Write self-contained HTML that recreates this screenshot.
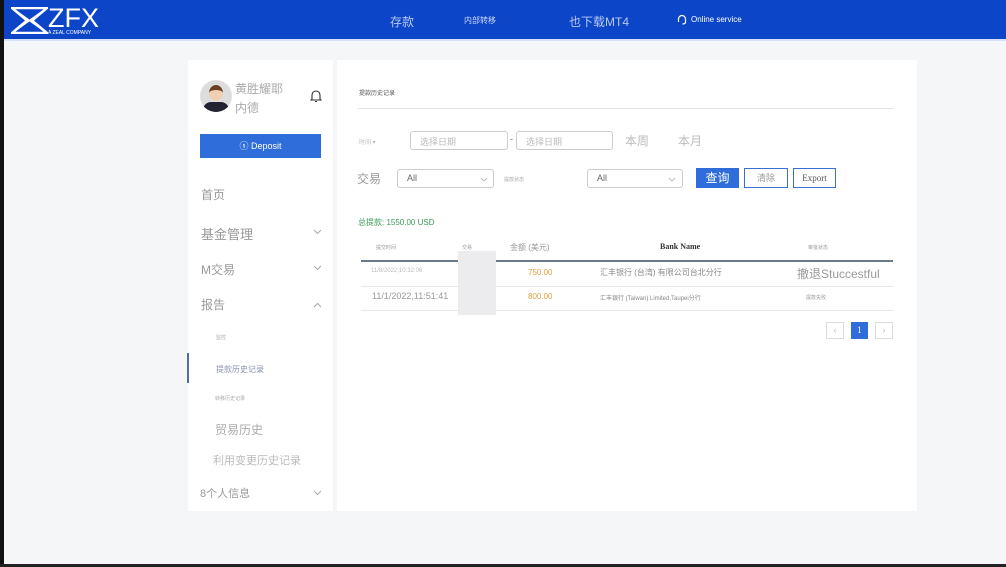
<!DOCTYPE html>
<html><head><meta charset="utf-8"><style>
*{margin:0;padding:0;box-sizing:border-box}
body{width:1006px;height:567px;overflow:hidden;background:#f5f6f8;font-family:"Liberation Sans","Noto Sans CJK SC",sans-serif;position:relative;color:#888}
.a{position:absolute;white-space:nowrap}
.hdr{left:0;top:0;width:1006px;height:41px;background:#0c45c8;border-bottom:2px solid #d4e3f7}
.card{background:#fff}
.sel{border:1px solid #ccc;border-radius:3px;height:19px;font-size:9px;color:#666;padding:3px 9px}
.btn{border:1px solid #3a6fd0;height:20px;font-size:9px;color:#555;text-align:center;line-height:18px}
</style></head><body>
<div class="a hdr"></div>
<div class="a" style="left:0;top:0;width:4px;height:567px;background:#111"></div>
<div class="a" style="left:0;top:564px;width:1006px;height:3px;background:#222"></div>
<!-- logo -->
<svg class="a" style="left:11px;top:7px" width="37" height="27" viewBox="0 0 37 27"><path d="M1 1H36L21 13.5L36 26H1L16 13.5Z" fill="none" stroke="#fff" stroke-width="2.5"/><path d="M1 1L36 26M36 1L1 26" stroke="#fff" stroke-width="1.5"/></svg>
<div class="a" style="left:48px;top:3px;font-size:27px;color:#fff;letter-spacing:0px">ZFX</div>
<div class="a" style="left:48px;top:30px;font-size:5px;color:#fff">A ZEAL COMPANY</div>
<div class="a" style="left:390px;top:13px;font-size:12px;color:#b8c9f0">存款</div>
<div class="a" style="left:464px;top:15px;font-size:8px;color:#d0dbf5">内部转移</div>
<div class="a" style="left:569px;top:13px;font-size:12px;color:#b8c9f0">也下载MT4</div>
<svg class="a" style="left:677px;top:14px" width="10" height="11" viewBox="0 0 10 11"><path d="M1.5 6V5a3.5 3.5 0 0 1 7 0v1M1.5 6v2M8.5 6v2.5Q8 10 5.5 10" fill="none" stroke="#fff" stroke-width="1.2"/></svg>
<div class="a" style="left:691px;top:15px;font-size:8px;color:#fff">Online service</div>
<!-- sidebar -->
<div class="a card" style="left:188px;top:60px;width:145px;height:451px"></div>
<div class="a" style="left:200px;top:80px;width:32px;height:32px;border-radius:50%;background:#ddd;overflow:hidden"><div style="position:absolute;left:9px;top:5px;width:14px;height:16px;border-radius:50%;background:#f1cfb2;border-top:5px solid #6b3f22"></div><div style="position:absolute;left:3px;top:22px;width:26px;height:12px;border-radius:8px 8px 0 0;background:#223"></div></div>
<div class="a" style="left:235px;top:80px;font-size:12px;color:#aaa">黄胜耀耶</div>
<div class="a" style="left:235px;top:99px;font-size:12px;color:#aaa">内德</div>
<svg class="a" style="left:310px;top:89px" width="12" height="14" viewBox="0 0 12 14"><path d="M2 10V6a4 4 0 0 1 8 0v4l1 1H1z M5 12.5h2" fill="none" stroke="#333" stroke-width="1.1"/></svg>
<div class="a" style="left:200px;top:134px;width:121px;height:24px;background:#2f6ddb;color:#fff;font-size:9px;text-align:center;line-height:24px">ⓢ Deposit</div>
<div class="a" style="left:201px;top:186px;font-size:12px;color:#999">首页</div>
<div class="a" style="left:201px;top:224px;font-size:13px;color:#999">基金管理</div>
<div class="a" style="left:201px;top:261px;font-size:12px;color:#999">M交易</div>
<div class="a" style="left:201px;top:296px;font-size:12px;color:#999">报告</div>
<svg class="a" style="left:313px;top:229px" width="9" height="6"><path d="M1 1l3.5 3.5L8 1" fill="none" stroke="#aaa"/></svg>
<svg class="a" style="left:313px;top:265px" width="9" height="6"><path d="M1 1l3.5 3.5L8 1" fill="none" stroke="#aaa"/></svg>
<svg class="a" style="left:313px;top:302px" width="9" height="6"><path d="M1 5l3.5-3.5L8 5" fill="none" stroke="#aaa"/></svg>
<svg class="a" style="left:313px;top:490px" width="9" height="6"><path d="M1 1l3.5 3.5L8 1" fill="none" stroke="#aaa"/></svg>
<div class="a" style="left:216px;top:334px;font-size:5px;color:#aaa">监控</div>
<div class="a" style="left:187px;top:353px;width:2px;height:30px;background:#5070a0"></div>
<div class="a" style="left:216px;top:364px;font-size:8px;color:#8890b0">提款历史记录</div>
<div class="a" style="left:215px;top:395px;font-size:5px;color:#aaa">转移历史记录</div>
<div class="a" style="left:215px;top:421px;font-size:12px;color:#aaa">贸易历史</div>
<div class="a" style="left:213px;top:452px;font-size:11px;color:#bbb">利用变更历史记录</div>
<div class="a" style="left:200px;top:485px;font-size:11px;color:#999">8个人信息</div>
<!-- main -->
<div class="a card" style="left:337px;top:60px;width:580px;height:451px"></div>
<div class="a" style="left:359px;top:88px;font-size:6px;color:#555">提款历史记录</div>
<div class="a" style="left:358px;top:108px;width:536px;height:1px;background:#e5e5e5"></div>
<div class="a" style="left:359px;top:137px;font-size:6px;color:#bbb">时间 ▾</div>
<div class="a sel" style="left:410px;top:131px;width:98px;color:#bbb">选择日期</div>
<div class="a" style="left:510px;top:134px;font-size:9px;color:#777">-</div>
<div class="a sel" style="left:516px;top:131px;width:97px;color:#bbb">选择日期</div>
<div class="a" style="left:625px;top:132px;font-size:12px;color:#bbb">本周</div>
<div class="a" style="left:678px;top:132px;font-size:12px;color:#bbb">本月</div>
<div class="a" style="left:357px;top:170px;font-size:12px;color:#999">交易</div>
<div class="a sel" style="left:397px;top:169px;width:97px">All</div>
<svg class="a" style="left:480px;top:177px" width="8" height="5"><path d="M1 1l3 3 3-3" fill="none" stroke="#bbb"/></svg>
<div class="a" style="left:504px;top:176px;font-size:5px;color:#aaa">提款状态</div>
<div class="a sel" style="left:587px;top:169px;width:96px">All</div>
<svg class="a" style="left:668px;top:177px" width="8" height="5"><path d="M1 1l3 3 3-3" fill="none" stroke="#bbb"/></svg>
<div class="a" style="left:696px;top:168px;width:43px;height:20px;background:#2f6ddb;color:#fff;font-size:12px;text-align:center;line-height:20px">查询</div>
<div class="a btn" style="left:744px;top:168px;width:44px;color:#999">清除</div>
<div class="a btn" style="left:793px;top:168px;width:43px;font-family:'Liberation Serif',serif">Export</div>
<div class="a" style="left:358px;top:217px;font-size:8px;color:#3a9a5a">总提款: 1550.00 USD</div>
<div class="a" style="left:376px;top:244px;font-size:5px;color:#999">提交时间</div>
<div class="a" style="left:462px;top:244px;font-size:5px;color:#999">交易</div>
<div class="a" style="left:510px;top:242px;font-size:8px;color:#999">金额 (美元)</div>
<div class="a" style="left:660px;top:242px;font-size:8px;color:#333;font-weight:bold;font-family:'Liberation Serif',serif">Bank Name</div>
<div class="a" style="left:808px;top:244px;font-size:5px;color:#999">审批状态</div>
<div class="a" style="left:361px;top:260px;width:532px;height:2px;background:#6a7a8a"></div>
<div class="a" style="left:361px;top:286px;width:532px;height:1px;background:#e8e8e8"></div>
<div class="a" style="left:361px;top:310px;width:532px;height:1px;background:#e8e8e8"></div>
<div class="a" style="left:458px;top:251px;width:38px;height:64px;background:#ececee"></div>
<div class="a" style="left:371px;top:268px;font-size:6px;color:#bbb">11/8/2022,10:32:06</div>
<div class="a" style="left:528px;top:268px;font-size:8px;color:#e0a040">750.00</div>
<div class="a" style="left:600px;top:267px;font-size:8px;color:#888">汇丰银行 (台湾) 有限公司台北分行</div>
<div class="a" style="left:797px;top:265px;font-size:12px;color:#999">撤退Stuccestful</div>
<div class="a" style="left:372px;top:291px;font-size:9px;color:#999">11/1/2022,11:51:41</div>
<div class="a" style="left:528px;top:292px;font-size:8px;color:#e0a040">800.00</div>
<div class="a" style="left:600px;top:293px;font-size:6px;color:#888">汇丰银行 (Taiwan) Limited,Taupei分行</div>
<div class="a" style="left:806px;top:294px;font-size:5px;color:#999">提款失败</div>
<div class="a" style="left:826px;top:322px;width:18px;height:17px;border:1px solid #ddd;font-size:9px;color:#bbb;text-align:center;line-height:15px">‹</div>
<div class="a" style="left:851px;top:322px;width:17px;height:17px;background:#2f6ddb;font-size:9px;color:#fff;text-align:center;line-height:17px;font-family:'Liberation Serif',serif">1</div>
<div class="a" style="left:875px;top:322px;width:18px;height:17px;border:1px solid #ddd;font-size:9px;color:#bbb;text-align:center;line-height:15px">›</div>
</body></html>
